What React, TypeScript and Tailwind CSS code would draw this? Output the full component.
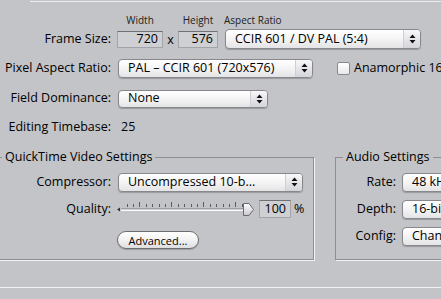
import React from "react";

function Arrows() {
  return (
    <svg width="7" height="10" viewBox="0 0 7 10">
      <path d="M3.5 0.5 L6.5 4 L0.5 4 Z" fill="#111" />
      <path d="M0.5 6 L6.5 6 L3.5 9.5 Z" fill="#111" />
    </svg>
  );
}

function Popup({ className, text }: { className: string; text: string }) {
  return (
    <div
      className={`flex shrink-0 items-stretch overflow-hidden rounded-[4px] border border-[#88888c] bg-[linear-gradient(#ffffff,#f4f4f4_50%,#e4e4e6)] shadow-[0_1px_1px_rgba(0,0,0,0.22)] ${className}`}
    >
      <div className="flex min-w-0 flex-1 items-center overflow-hidden whitespace-nowrap pl-[9px] leading-none text-black">
        {text}
      </div>
      <div className="flex w-[17px] shrink-0 items-center justify-center border-l border-[#cfcfd3] bg-[linear-gradient(#f8f8fa,#e6e6ea_50%,#d4d5da)]">
        <Arrows />
      </div>
    </div>
  );
}

function Field({ className, value }: { className: string; value: string }) {
  return (
    <div
      className={`flex shrink-0 items-center justify-end border border-[#a4a4a8] border-t-[#707074] bg-[#cfd0d3] pr-[4px] leading-none text-black ${className}`}
    >
      {value}
    </div>
  );
}

function Slider() {
  const ticks: React.ReactElement[] = [];
  for (let i = 0; i < 19; i++) {
    const x = 11.5 + i * 6.4;
    const major = i % 5 === 2;
    ticks.push(
      <rect key={i} x={Math.round(x)} y={major ? 3 : 5} width={1} height={major ? 5 : 3} fill="#5a5a5e" />
    );
  }
  return (
    <svg width="139" height="20" viewBox="0 0 139 20" className="shrink-0">
      <path d="M2 10.5 L5 8.5 L5 12.5 Z" fill="#333" />
      <rect x="6" y="9.5" width="124" height="1" fill="#7d7d82" />
      <rect x="6" y="10.5" width="124" height="1.5" fill="#fbfbfb" />
      {ticks}
      <defs>
        <linearGradient id="th" x1="0" y1="0" x2="0" y2="1">
          <stop offset="0" stopColor="#ffffff" />
          <stop offset="1" stopColor="#c9c9cd" />
        </linearGradient>
      </defs>
      <path d="M128.5 4.5 H134 L138.5 10.5 L134 16.5 H128.5 Z" fill="url(#th)" stroke="#6a6a6e" strokeWidth="1" />
    </svg>
  );
}

export default function App() {
  return (
    <div className="relative h-[299px] w-[441px] overflow-hidden bg-[#c3c4c8] font-['Open_Sans','Liberation_Sans',sans-serif] text-[12.5px] text-black">
      <div className="ml-[30px] mt-[1px] h-px bg-[#ececee]" />

      <div className="mt-[12px] flex h-[12px] items-center text-[10px] leading-none text-[#1c1c1c]">
        <div className="ml-[117px] w-[46px] text-center">Width</div>
        <div className="ml-[15px] w-[40px] text-center">Height</div>
        <div className="ml-[6px]">Aspect Ratio</div>
      </div>

      <div className="mt-[3px] flex h-[20px] items-center">
        <div className="w-[111px] shrink-0 text-right">Frame Size:</div>
        <Field className="ml-[6px] h-[17px] w-[46px]" value="720" />
        <div className="mt-[3px] w-[15px] shrink-0 text-center leading-none">x</div>
        <Field className="h-[17px] w-[40px]" value="576" />
        <Popup className="ml-[7px] h-[20px] w-[196px]" text="CCIR 601 / DV PAL (5:4)" />
      </div>

      <div className="mt-[9px] flex h-[20px] items-center">
        <div className="w-[111px] shrink-0 text-right">Pixel Aspect Ratio:</div>
        <Popup className="ml-[7px] h-[19px] w-[195px]" text="PAL – CCIR 601 (720x576)" />
        <div className="ml-[24px] h-[13px] w-[13px] shrink-0 rounded-[2px] border border-[#8a8a8e] bg-[linear-gradient(#ffffff,#e8e8ea)]" />
        <div className="ml-[4px] whitespace-nowrap">Anamorphic 16:9</div>
      </div>

      <div className="mt-[11px] flex h-[19px] items-center">
        <div className="w-[111px] shrink-0 text-right">Field Dominance:</div>
        <Popup className="ml-[7px] h-[18px] w-[150px]" text="None" />
      </div>

      <div className="mt-[12px] flex h-[14px] items-center">
        <div className="w-[111px] shrink-0 text-right">Editing Timebase:</div>
        <div className="ml-[10px]">25</div>
      </div>

      <div className="mt-[23px] flex h-[103px]">
        <div className="relative -ml-px h-full w-[315px] shrink-0 border border-[#8e8e92] shadow-[1px_1px_0_#f2f2f4]">
          <div className="absolute left-[2px] top-[-8px] h-[14px] whitespace-nowrap bg-[#c3c4c8] px-[3px] leading-[14px]">
            QuickTime Video Settings
          </div>
          <div className="mt-[14px] flex h-[20px] items-center">
            <div className="w-[111px] shrink-0 text-right">Compressor:</div>
            <Popup className="ml-[7px] h-[19px] w-[185px]" text="Uncompressed 10-b..." />
          </div>
          <div className="mt-[7px] flex h-[20px] items-center">
            <div className="w-[111px] shrink-0 text-right">Quality:</div>
            <div className="ml-[4px] flex">
              <Slider />
            </div>
            <Field className="ml-[5px] h-[18px] w-[32px]" value="100" />
            <div className="ml-[3px]">%</div>
          </div>
          <div className="ml-[117px] mt-[12px] flex h-[18px] w-[82px] items-center justify-center rounded-full border border-[#6e6e72] bg-[linear-gradient(#ffffff,#f2f2f2_50%,#dedee0)] text-[11px] leading-none shadow-[0_1px_1px_rgba(0,0,0,0.2)]">
            Advanced...
          </div>
        </div>

        <div className="relative ml-[21px] h-full w-[140px] shrink-0 border border-[#8e8e92] shadow-[1px_1px_0_#f2f2f4]">
          <div className="absolute left-[7px] top-[-8px] h-[14px] whitespace-nowrap bg-[#c3c4c8] px-[3px] leading-[14px]">
            Audio Settings
          </div>
          <div className="mt-[14px] flex h-[20px] items-center">
            <div className="w-[60px] shrink-0 text-right">Rate:</div>
            <Popup className="ml-[6px] h-[19px] w-[100px]" text="48 kHz" />
          </div>
          <div className="mt-[7px] flex h-[20px] items-center">
            <div className="w-[60px] shrink-0 text-right">Depth:</div>
            <Popup className="ml-[6px] h-[19px] w-[100px]" text="16-bit" />
          </div>
          <div className="mt-[7px] flex h-[20px] items-center">
            <div className="w-[60px] shrink-0 text-right">Config:</div>
            <Popup className="ml-[6px] h-[19px] w-[100px]" text="Channel Grouped" />
          </div>
        </div>
      </div>

      <div className="mt-[27px] h-px bg-[#f2f2f4]" />
    </div>
  );
}
